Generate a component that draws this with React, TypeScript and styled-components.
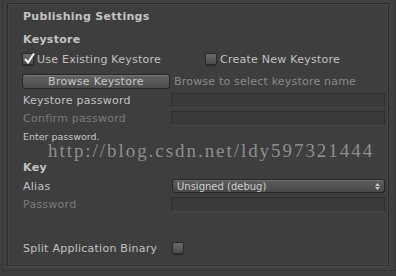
import React from "react";
import styled, { createGlobalStyle } from "styled-components";

const Global = createGlobalStyle`
  html, body { margin: 0; padding: 0; background: #3f3f3f; }
  body { width: 396px; height: 276px; overflow: hidden; font-family: "DejaVu Sans", sans-serif; }
`;

const Frame = styled.div`
  position: relative;
  box-sizing: border-box;
  width: 394px;
  height: 271px;
  margin-left: 2px;
  border-left: 1px solid #353535;
  border-right: 1px solid #353535;
  border-bottom: 1px solid #333333;
  background: #3f3f3f;
  padding: 3px 6px 0 4px;
`;

const Panel = styled.div`
  box-sizing: border-box;
  height: 263px;
  border: 1px solid #2c2c2c;
  box-shadow: inset 0 0 0 1px #454545, 0 1px 0 #4a4a4a;
  background: #3e3e3e;
  padding: 3px 3px 0 15px;
  display: flex;
  flex-direction: column;
`;

const Row = styled.div<{ $h?: number; $mt?: number }>`
  display: flex;
  align-items: center;
  height: ${(p) => p.$h ?? 18}px;
  margin-top: ${(p) => p.$mt ?? 0}px;
`;

const Heading = styled.div`
  font-weight: bold;
  font-size: 11px;
  color: #c4c4c4;
  letter-spacing: 0.3px;
`;

const Label = styled.div<{ $dim?: boolean; $w?: number }>`
  font-size: 11px;
  color: ${(p) => (p.$dim ? "#7c7c7c" : "#c2c2c2")};
  width: ${(p) => (p.$w ? `${p.$w}px` : "auto")};
  flex: none;
  letter-spacing: 0.25px;
  white-space: nowrap;
`;

const Small = styled.div`
  font-size: 9.5px;
  color: #c8c8c8;
`;

const CheckItem = styled.label<{ $w?: number }>`
  display: flex;
  align-items: center;
  gap: 3px;
  width: ${(p) => (p.$w ? `${p.$w}px` : "auto")};
  margin-left: -1px;
`;

const Box = styled.span`
  box-sizing: border-box;
  width: 12px;
  height: 12px;
  border-radius: 2px;
  border: 1px solid #2a2a2a;
  background: linear-gradient(#6a6a6a, #4c4c4c);
  box-shadow: 0 1px 1px rgba(0, 0, 0, 0.35);
  position: relative;
  flex: none;
`;

const Tick = styled.svg`
  position: absolute;
  left: 0px;
  top: -2px;
`;

const Button = styled.div`
  box-sizing: border-box;
  width: 148px;
  height: 15px;
  margin-left: -1px;
  border: 1px solid #262626;
  border-radius: 3px;
  background: linear-gradient(#636363, #4c4c4c);
  box-shadow: inset 0 1px 0 #777;
  color: #c8c8c8;
  font-size: 11px;
  letter-spacing: 0.3px;
  display: flex;
  align-items: center;
  justify-content: center;
  flex: none;
`;

const Hint = styled.div`
  font-size: 11px;
  color: #8a8a8a;
  margin-left: 4px;
  white-space: nowrap;
  letter-spacing: 0.2px;
`;

const Field = styled.div`
  box-sizing: border-box;
  flex: 1;
  height: 15px;
  border: 1px solid #2e2e2e;
  border-bottom-color: #474747;
  background: #3a3a3a;
`;

const Dropdown = styled.div`
  box-sizing: border-box;
  flex: 1;
  height: 14px;
  margin-left: 1px;
  border: 1px solid #262626;
  border-radius: 3px;
  background: linear-gradient(#5e5e5e, #474747);
  box-shadow: inset 0 1px 0 #707070;
  color: #cfcfcf;
  font-size: 10px;
  padding-left: 4px;
  display: flex;
  align-items: center;
  justify-content: space-between;
  padding-right: 4px;
`;

const Watermark = styled.div`
  position: absolute;
  left: 45px;
  top: 140px;
  font-family: "Liberation Serif", serif;
  font-size: 19px;
  color: rgba(200, 200, 200, 0.6);
  letter-spacing: 1.95px;
  white-space: nowrap;
`;

const Check = ({ checked }: { checked?: boolean }) => (
  <Box>
    {checked && (
      <Tick width="13" height="13" viewBox="0 0 13 13">
        <path d="M2 7 L5 10.5 L11 1.5" stroke="#f0f0f0" strokeWidth="2.2" fill="none" />
      </Tick>
    )}
  </Box>
);

export default function App() {
  return (
    <>
      <Global />
      <Frame>
        <Panel>
          <Row>
            <Heading>Publishing Settings</Heading>
          </Row>
          <Row $mt={5}>
            <Heading>Keystore</Heading>
          </Row>
          <Row $mt={2}>
            <CheckItem $w={184}>
              <Check checked />
              <Label>Use Existing Keystore</Label>
            </CheckItem>
            <CheckItem>
              <Check />
              <Label>Create New Keystore</Label>
            </CheckItem>
          </Row>
          <Row $mt={4}>
            <Button>Browse Keystore</Button>
            <Hint>Browse to select keystore name</Hint>
          </Row>
          <Row $mt={1}>
            <Label $w={148}>Keystore password</Label>
            <Field />
          </Row>
          <Row>
            <Label $w={148} $dim>Confirm password</Label>
            <Field />
          </Row>
          <Row>
            <Small>Enter password.</Small>
          </Row>
          <Row $mt={13}>
            <Heading>Key</Heading>
          </Row>
          <Row $mt={1}>
            <Label $w={148}>Alias</Label>
            <Dropdown>
              <span>Unsigned (debug)</span>
              <svg width="5" height="9" viewBox="0 0 5 9">
                <path d="M0 4 L2.5 1 L5 4 Z M0 5 L2.5 8 L5 5 Z" fill="#c8c8c8" />
              </svg>
            </Dropdown>
          </Row>
          <Row>
            <Label $w={148} $dim>Password</Label>
            <Field />
          </Row>
          <Row $mt={26}>
            <Label $w={149}>Split Application Binary</Label>
            <Check />
          </Row>
        </Panel>
        <Watermark>http://blog.csdn.net/ldy597321444</Watermark>
      </Frame>
    </>
  );
}
